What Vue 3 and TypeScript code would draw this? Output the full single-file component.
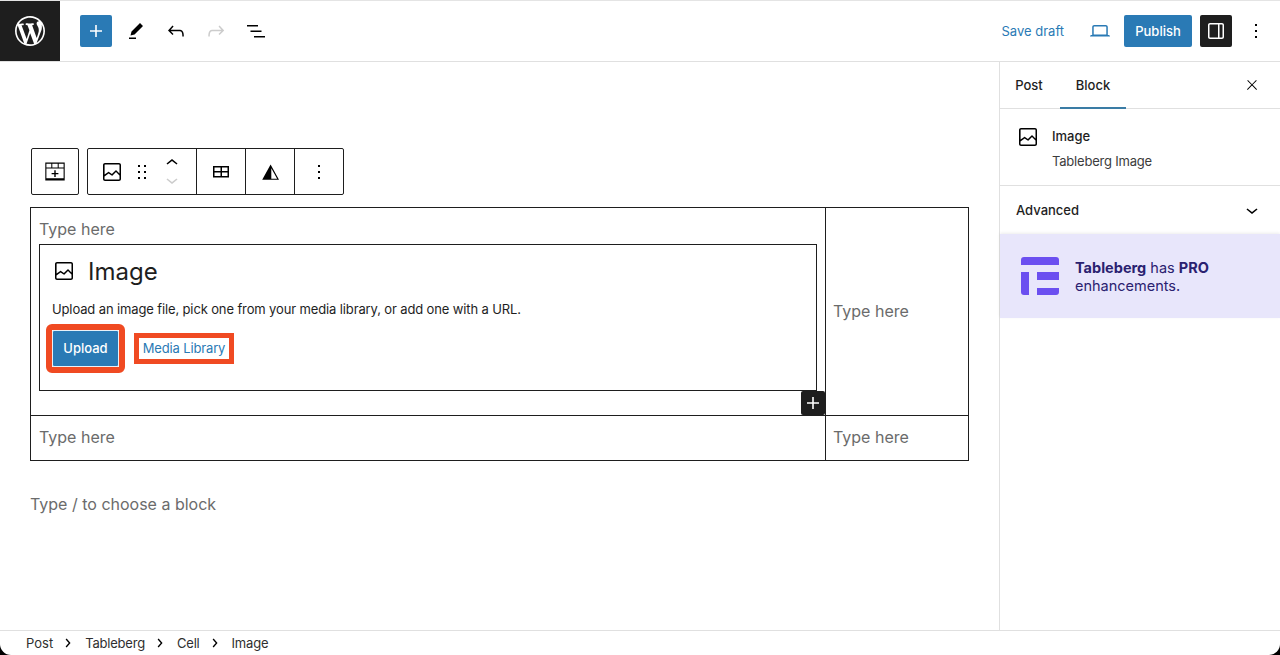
<script setup lang="ts">
const imageIcon = "M19 3H5c-1.1 0-2 .9-2 2v14c0 1.1.9 2 2 2h14c1.1 0 2-.9 2-2V5c0-1.1-.9-2-2-2zM5 4.5h14c.3 0 .5.2.5.5v8.4l-3-2.9c-.3-.3-.8-.3-1 0L11.9 14 9 12c-.3-.2-.6-.2-.8 0l-3.6 2.6V5c-.1-.3.1-.5.4-.5zm14 15H5c-.3 0-.5-.2-.5-.5v-2.4l4.1-3 3 1.9c.3.2.7.2.9-.1L16 12l3.5 3.4V19c0 .3-.2.5-.5.5z";
const crumbs = ["Post", "Tableberg", "Cell", "Image"];
</script>

<template>
  <div class="page">
    <header class="top">
      <div class="logo">
        <svg width="30" height="30" viewBox="0 0 20 20" fill="#fff"><path d="M20 10c0-5.51-4.49-10-10-10C4.48 0 0 4.49 0 10c0 5.52 4.48 10 10 10 5.51 0 10-4.48 10-10zM7.78 15.37L4.37 6.22c.55-.02 1.17-.08 1.17-.08.5-.06.44-1.13-.06-1.11 0 0-1.45.11-2.37.11-.18 0-.37 0-.58-.01C4.12 2.69 6.87 1.11 10 1.11c2.33 0 4.45.87 6.05 2.34-.68-.11-1.65.39-1.65 1.58 0 .74.45 1.36.9 2.1.35.61.55 1.36.55 2.46 0 1.49-1.4 5-1.4 5l-3.03-8.37c.54-.02.82-.17.82-.17.5-.05.44-1.25-.06-1.22 0 0-1.44.12-2.38.12-.87 0-2.33-.12-2.33-.12-.5-.03-.56 1.2-.06 1.22l.92.08 1.26 3.41zM17.41 10c.24-.64.74-1.87.43-4.25.7 1.29 1.05 2.71 1.05 4.25 0 3.29-1.73 6.24-4.4 7.78.97-2.59 1.94-5.2 2.92-7.78zM6.1 18.09C3.12 16.65 1.11 13.53 1.11 10c0-1.3.23-2.48.72-3.59C3.25 10.3 4.67 14.2 6.1 18.09zm4.03-6.63l2.58 6.98c-.86.29-1.76.45-2.71.45-.79 0-1.57-.11-2.29-.33.81-2.38 1.62-4.74 2.42-7.1z"/></svg>
      </div>
      <div class="tools">
        <button class="ib add"><svg width="24" height="24" viewBox="0 0 24 24" fill="#fff"><path d="M18 11.2h-5.2V6h-1.6v5.2H6v1.6h5.2V18h1.6v-5.2H18z"/></svg></button>
        <button class="ib"><svg width="24" height="24" viewBox="0 0 24 24"><path d="m19 7-3-3-8.5 8.5-1 4 4-1L19 7Zm-7 11.5H5V20h7v-1.5Z"/></svg></button>
        <button class="ib"><svg width="24" height="24" viewBox="0 0 24 24"><path d="M18.3 11.7c-.6-.6-1.4-.9-2.3-.9H6.7l2.9-3.3-1.1-1-4.5 5L8.5 16l1-1-2.7-2.7H16c.5 0 .9.2 1.3.5 1 1 1 3.4 1 4.5v.3h1.5v-.2c0-1.5 0-4.3-1.5-5.7z"/></svg></button>
        <button class="ib"><svg width="24" height="24" viewBox="0 0 24 24" fill="#ccc"><path d="M15.6 6.5l-1.1 1 2.9 3.3H8c-.9 0-1.7.3-2.3.9-1.4 1.5-1.4 4.2-1.4 5.6v.2h1.5v-.3c0-1.1 0-3.5 1-4.5.3-.3.7-.5 1.3-.5h9.2L14.5 15l1.1 1.1 4.6-4.6-4.6-5z"/></svg></button>
        <button class="ib"><svg width="24" height="24" viewBox="0 0 24 24"><path d="M3 6h11v1.5H3V6Zm3.5 5.5h11V13h-11v-1.5ZM21 17H10v1.5h11V17Z"/></svg></button>
      </div>
      <div class="actions">
        <span class="save">Save draft</span>
        <svg class="laptop" width="24" height="24" viewBox="0 0 24 24" fill="#2a7ab5"><path d="M20.5 16h-.7V8c0-1.1-.9-2-2-2H6.2c-1.1 0-2 .9-2 2v8h-.7c-.8 0-1.5.7-1.5 1.5h20c0-.8-.7-1.5-1.5-1.5zM5.7 8c0-.3.2-.5.5-.5h11.6c.3 0 .5.2.5.5v7.6H5.7V8z"/></svg>
        <button class="publish">Publish</button>
        <button class="ib panel"><svg width="24" height="24" viewBox="0 0 24 24" fill="#fff"><path d="M18 4H6c-1.1 0-2 .9-2 2v12c0 1.1.9 2 2 2h12c1.1 0 2-.9 2-2V6c0-1.1-.9-2-2-2zm-4 14.5H6c-.3 0-.5-.2-.5-.5V6c0-.3.2-.5.5-.5h8v13zm4.5-.5c0 .3-.2.5-.5.5h-2.5v-13H18c.3 0 .5.2.5.5v12z"/></svg></button>
        <button class="ib more"><svg width="24" height="24" viewBox="0 0 24 24"><path d="M13 19h-2v-2h2v2zm0-6h-2v-2h2v2zm0-6h-2V5h2v2z"/></svg></button>
      </div>
    </header>

    <div class="main">
      <section class="canvas">
        <div class="toolbars">
          <div class="tb single">
            <button class="seg">
              <svg width="24" height="24" viewBox="0 0 24 24" fill-rule="evenodd"><path d="M2.3 2.6h19.4v18H2.3v-18Zm1.1 1.1v3.8h4.9V3.7H3.4Zm5.9 0v3.8h5.4V3.7H9.3Zm6.4 0v3.8h4.9V3.7h-4.9ZM3.4 8.6v9.6h17.2V8.6H3.4Zm7.9 1.6h1.4v2.7h2.7v1.4h-2.7v2.7h-1.4v-2.7H8.6v-1.4h2.7v-2.7Z"/></svg>
            </button>
          </div>
          <div class="tb">
            <div class="seg first">
              <svg width="24" height="24" viewBox="0 0 24 24"><path :d="imageIcon"/></svg>
              <svg class="drag" width="24" height="24" viewBox="0 0 24 24"><path d="M8 7h2V5H8v2zm0 6h2v-2H8v2zm0 6h2v-2H8v2zm6-14v2h2V5h-2zm0 8h2v-2h-2v2zm0 6h2v-2h-2v2z"/></svg>
              <div class="mover">
                <svg width="24" height="16" viewBox="0 4 24 16"><path d="M6.5 12.4L12 8l5.5 4.4-.9 1.2L12 10l-4.5 3.6-1-1.2z"/></svg>
                <svg width="24" height="16" viewBox="0 4 24 16" fill="#ccc"><path d="M17.5 11.6L12 16l-5.5-4.4.9-1.2L12 14l4.5-3.6 1 1.2z"/></svg>
              </div>
            </div>
            <button class="seg w49"><svg width="24" height="24" viewBox="0 0 24 24"><path d="M4 6v11.5h16V6H4zm1.5 1.5h6V11h-6V7.5zm0 8.5v-3.5h6V16h-6zm13 0H13v-3.5h5.5V16zM13 11V7.5h5.5V11H13z"/></svg></button>
            <button class="seg w49"><svg width="24" height="24" viewBox="0 0 24 24" fill-rule="evenodd"><path d="M12.6 4.6 21 19.8H4.2L12.6 4.6Zm.7 3.6v10.5h5.8L13.3 8.2Z"/></svg></button>
            <button class="seg w50"><svg width="24" height="24" viewBox="0 0 24 24"><path d="M13 19h-2v-2h2v2zm0-6h-2v-2h2v2zm0-6h-2V5h2v2z"/></svg></button>
          </div>
        </div>

        <div class="table">
          <div class="cell big">
            <div class="ph">Type here</div>
            <div class="placeholder">
              <div class="p-title">
                <svg width="24" height="24" viewBox="0 0 24 24"><path :d="imageIcon"/></svg>
                <span>Image</span>
              </div>
              <p class="p-text">Upload an image file, pick one from your media library, or add one with a URL.</p>
              <div class="p-actions">
                <span class="ring"><button class="upload">Upload</button></span>
                <span class="ring2"><span class="media">Media Library</span></span>
              </div>
              <button class="appender"><svg width="24" height="24" viewBox="0 0 24 24" fill="#fff"><path d="M18 11.2h-5.2V6h-1.6v5.2H6v1.6h5.2V18h1.6v-5.2H18z"/></svg></button>
            </div>
          </div>
          <div class="cell side center">Type here</div>
          <div class="cell low center">Type here</div>
          <div class="cell low side center">Type here</div>
        </div>

        <div class="para">Type / to choose a block</div>
      </section>

      <aside class="sidebar">
        <div class="tabs">
          <span class="tab post">Post</span>
          <span class="tab block">Block</span>
          <svg class="close" width="16" height="16" viewBox="0 0 24 24"><path d="M13 11.8l6.1-6.3-1-1-6.1 6.2-6.1-6.2-1 1 6.1 6.3-6.5 6.7 1 1 6.5-6.6 6.5 6.6 1-1z"/></svg>
        </div>
        <div class="card">
          <svg width="24" height="24" viewBox="0 0 24 24"><path :d="imageIcon"/></svg>
          <div>
            <div class="card-title">Image</div>
            <div class="card-desc">Tableberg Image</div>
          </div>
        </div>
        <div class="adv">
          <span>Advanced</span>
          <svg width="24" height="24" viewBox="0 0 24 24"><path d="M17.5 11.6L12 16l-5.5-4.4.9-1.2L12 14l4.5-3.6 1 1.2z"/></svg>
        </div>
        <div class="promo">
          <svg width="38" height="38" viewBox="0 0 38 38" fill="#6b4ff0"><path d="M0 3a3 3 0 0 1 3-3h32a3 3 0 0 1 3 3v5H0V3ZM0 15h8v23H3a3 3 0 0 1-3-3V15ZM16 15h22v8H16zM16 31h22v4a3 3 0 0 1-3 3H16z"/></svg>
          <div class="promo-text"><b>Tableberg</b> has <b>PRO</b><br>enhancements.</div>
        </div>
      </aside>
    </div>

    <footer class="foot">
      <template v-for="(c, i) in crumbs" :key="c">
        <span class="crumb">{{ c }}</span>
        <svg v-if="i < crumbs.length - 1" width="18" height="18" viewBox="0 0 24 24"><path d="M10.2 6 8.8 7.2l4.2 4.8-4.2 4.8 1.4 1.2 5.2-6z"/></svg>
      </template>
    </footer>
  </div>
</template>

<style>
html, body { margin: 0; background: #000; }
</style>

<style scoped>
.page {
  width: 1280px; height: 655px; display: flex; flex-direction: column;
  font-family: Inter, "Liberation Sans", sans-serif; color: #1e1e1e; overflow: hidden; background: #fff;
  border-radius: 0 0 11px 11px;
}
button { border: 0; padding: 0; background: none; font: inherit; color: inherit; }
svg { display: block; flex: none; }

.top { height: 62px; box-sizing: border-box; border-top: 1px solid #e4e4e4; border-bottom: 1px solid #e0e0e0; display: flex; align-items: center; flex: none; }
.logo { width: 60px; height: 60px; background: #1e1e1e; display: flex; align-items: center; justify-content: center; }
.tools { display: flex; align-items: center; gap: 8px; margin-left: 20px; }
.ib { width: 32px; height: 32px; display: flex; align-items: center; justify-content: center; border-radius: 2px; }
.add { background: #2a7ab5; }
.actions { margin-left: auto; display: flex; align-items: center; }
.save { font-size: 13px; color: #2a7ab5; }
.laptop { margin-left: 24px; }
.publish { margin-left: 12px; width: 68px; height: 32px; border-radius: 2px; background: #2a7ab5; color: #fff; font-size: 13px; font-weight: 500; }
.panel { background: #1e1e1e; margin-left: 8px; }
.more { margin-left: 8px; margin-right: 8px; }

.main { flex: 1; min-height: 0; display: flex; }
.canvas { flex: 1; min-width: 0; padding: 86px 30px 0; }
.toolbars { display: flex; gap: 8px; margin-left: 1px; height: 47px; }
.tb { display: flex; border: 1px solid #1e1e1e; border-radius: 2px; box-sizing: border-box; width: 257px; }
.tb.single { width: 48px; }
.seg { display: flex; align-items: center; justify-content: center; flex: 1; }
.seg.first { flex: none; width: 109px; justify-content: flex-start; padding-left: 12px; box-sizing: border-box; border-right: 1px solid #1e1e1e; }
.drag { margin-left: 6px; }
.mover { display: flex; flex-direction: column; margin-left: 6px; gap: 1px; }
.seg.w49 { flex: none; width: 49px; border-right: 1px solid #1e1e1e; box-sizing: border-box; }
.seg.w50 { flex: none; width: 48px; }

.table { margin-top: 12px; width: 939px; box-sizing: border-box; border: 1px solid #1e1e1e; display: grid; grid-template-columns: 794px 143px; grid-template-rows: 207px 45px; }
.cell { box-sizing: border-box; padding: 0 8px; font-size: 16px; color: #6b6b6b; }
.cell.big { padding-top: 11px; }
.cell.side { border-left: 1px solid #1e1e1e; padding-left: 7px; }
.cell.low { border-top: 1px solid #1e1e1e; }
.center { display: flex; align-items: center; padding-bottom: 2px; }
.ph { line-height: 20px; height: 25px; }
.placeholder { position: relative; height: 147px; box-sizing: border-box; border: 1px solid #1e1e1e; padding: 11px 12px 0; color: #1e1e1e; }
.p-title { display: flex; align-items: center; gap: 12px; height: 30px; font-size: 24px; }
.p-text { margin: 14px 0 0; font-size: 13px; line-height: 18px; letter-spacing: -0.13px; }
.p-actions { display: flex; align-items: center; margin: 6px 0 0 -6px; }
.ring { display: block; border: 6px solid #f04a22; border-radius: 6px; line-height: 0; }
.upload { display: block; width: 67px; height: 37px; border-radius: 2px; background: #2a7ab5; color: #fff; font-size: 13px; font-weight: 500; border: 1px solid #e8f1f8; line-height: 35px; }
.ring2 { margin-left: 9px; border: 5px solid #f04a22; height: 31px; box-sizing: border-box; width: 100px; display: flex; align-items: center; justify-content: center; padding-bottom: 1px; }
.media { font-size: 13px; color: #2a7ab5; white-space: nowrap; letter-spacing: -0.15px; }
.appender { position: absolute; right: -9px; bottom: -25px; width: 24px; height: 24px; background: #1e1e1e; display: flex; align-items: center; justify-content: center; border-radius: 2px; }

.para { margin-top: 33px; font-size: 16px; line-height: 20px; color: #6b6b6b; }

.sidebar { width: 281px; box-sizing: border-box; border-left: 1px solid #e0e0e0; flex: none; }
.tabs { height: 47px; box-sizing: border-box; border-bottom: 1px solid #e0e0e0; position: relative; display: flex; align-items: center; font-size: 13px; font-weight: 500; }
.tab { height: 100%; display: flex; align-items: center; justify-content: center; box-sizing: border-box; }
.post { width: 60px; padding-right: 2px; }
.block { width: 66px; border-bottom: 2px solid #3a7ca5; margin-bottom: -1px; height: 47px; }
.close { margin-left: auto; margin-right: 20px; }
.card { display: flex; gap: 12px; padding: 16px 16px 0; height: 77px; box-sizing: border-box; border-bottom: 1px solid #e0e0e0; }
.card-title { font-size: 13px; font-weight: 500; line-height: 24px; margin-top: -1px; }
.card-desc { font-size: 13px; line-height: 18px; margin-top: 4px; color: #3c3c3c; letter-spacing: -0.2px; }
.adv { height: 48px; display: flex; align-items: center; justify-content: space-between; padding: 0 16px; font-size: 13px; font-weight: 500; box-sizing: border-box; }
.promo { height: 84px; background: #e8e6fb; display: flex; align-items: center; gap: 16px; padding: 0 21px; box-sizing: border-box; box-shadow: 0 -1px 3px rgba(0,0,0,.08); }
.promo-text { font-size: 14.5px; line-height: 18px; color: #2a2170; padding-top: 2px; }

.foot { height: 25px; box-sizing: border-box; border-top: 1px solid #e0e0e0; display: flex; align-items: center; padding-left: 26px; font-size: 13px; flex: none; color: #2f2f2f; letter-spacing: -0.2px; }
.foot .crumb:first-child { letter-spacing: 0; }
.foot svg { margin: 0 8px 0 6px; }
</style>
